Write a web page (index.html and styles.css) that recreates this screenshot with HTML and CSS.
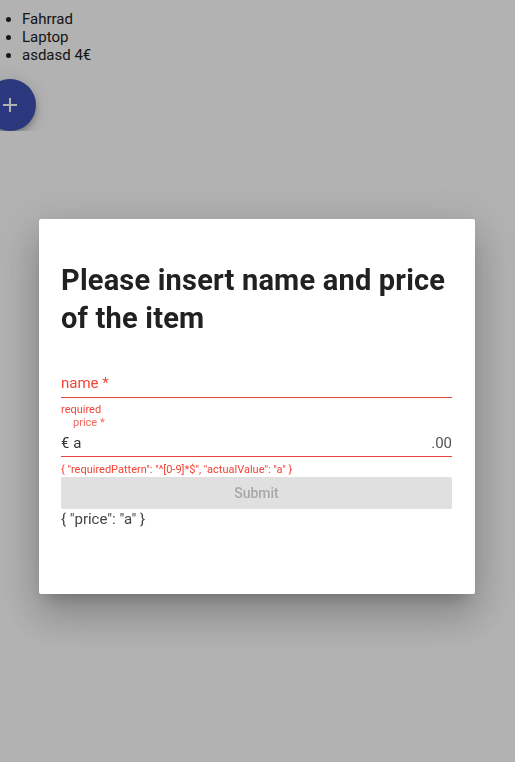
FILE: index.html
```html
<!DOCTYPE html>
<html lang="de">
<head>
<meta charset="utf-8">
<title>Items</title>
<link rel="stylesheet" href="styles.css">
</head>
<body>
  <main class="page">
    <ul class="items">
      <li>Fahrrad</li>
      <li>Laptop</li>
      <li>asdasd 4€</li>
    </ul>
    <div class="fab" role="button" aria-label="add">
      <svg width="14" height="14" viewBox="0 0 14 14" aria-hidden="true">
        <path d="M7 0v14M0 7h14" stroke="currentColor" stroke-width="2" fill="none"/>
      </svg>
    </div>
  </main>

  <div class="overlay">
    <section class="dialog" role="dialog">
      <h1 class="dialog-title">Please insert name and price of the item</h1>
      <form class="form">
        <div class="field field-name">
          <div class="field-row"><span class="field-label">name *</span></div>
        </div>
        <div class="field-hint">required</div>
        <div class="field-float">price *</div>
        <div class="field field-price">
          <div class="field-row">
            <span class="field-value">€ a</span>
            <span class="field-suffix">.00</span>
          </div>
        </div>
        <div class="field-error">{ "requiredPattern": "^[0-9]*$", "actualValue": "a" }</div>
        <button class="submit" type="button" disabled>Submit</button>
        <div class="json">{ "price": "a" }</div>
      </form>
    </section>
  </div>
</body>
</html>
```

FILE: styles.css
```css
html, body {
  margin: 0;
  padding: 0;
}
body {
  background: #ffffff;
  font-family: Roboto, "Liberation Sans", Arial, sans-serif;
  color: #212121;
  overflow: hidden;
}
.page {
  padding-top: 10px;
}
.items {
  margin: 0;
  padding-left: 22px;
  font-size: 15px;
  line-height: 18px;
  color: #212121;
}
.fab {
  display: flex;
  align-items: center;
  justify-content: center;
  width: 52px;
  height: 52px;
  margin: 15px 0 0 -16px;
  border-radius: 50%;
  background: #3f51b5;
  color: #ffffff;
  box-shadow: 0 3px 5px -1px rgba(0,0,0,.2), 0 6px 10px 0 rgba(0,0,0,.14), 0 1px 18px 0 rgba(0,0,0,.12);
}
.overlay {
  position: fixed;
  inset: 0;
  background: rgba(0,0,0,.3);
  display: flex;
  justify-content: center;
  align-items: flex-start;
  padding-top: 219px;
}
.dialog {
  box-sizing: border-box;
  width: 436px;
  height: 375px;
  margin-left: -1px;
  padding: 42px 23px 0 22px;
  background: #ffffff;
  border-radius: 2px;
  box-shadow: 0 11px 15px -7px rgba(0,0,0,.2), 0 24px 38px 3px rgba(0,0,0,.14), 0 9px 46px 8px rgba(0,0,0,.12);
}
.dialog-title {
  margin: 0;
  font-size: 29px;
  line-height: 38px;
  letter-spacing: 0.2px;
  font-weight: 700;
  color: #212121;
}
.form {
  display: flex;
  flex-direction: column;
  margin-top: 36px;
}
.field {
  border-bottom: 1px solid #e5473c;
  padding-bottom: 4px;
}
.field-row {
  display: flex;
  justify-content: space-between;
  font-size: 15px;
  line-height: 20px;
}
.field-label {
  color: #f44336;
}
.field-hint {
  margin-top: 5px;
  font-size: 11px;
  line-height: 13px;
  color: #f44336;
}
.field-float {
  padding-left: 12px;
  font-size: 11px;
  line-height: 13px;
  color: #f6675d;
}
.field-price {
  margin-top: 4px;
  padding-bottom: 3px;
}
.field-value {
  color: #333333;
}
.field-suffix {
  color: #555555;
}
.field-error {
  margin-top: 6px;
  font-size: 11px;
  line-height: 13px;
  color: #f44336;
}
.submit {
  margin-top: 1px;
  height: 32px;
  padding: 0;
  border: none;
  border-radius: 2px;
  background: #e0e0e0;
  color: rgba(0,0,0,.26);
  font-family: Roboto, "Liberation Sans", Arial, sans-serif;
  font-size: 14px;
  font-weight: 500;
}
.json {
  font-size: 15px;
  line-height: 20px;
  color: #444444;
}
```
